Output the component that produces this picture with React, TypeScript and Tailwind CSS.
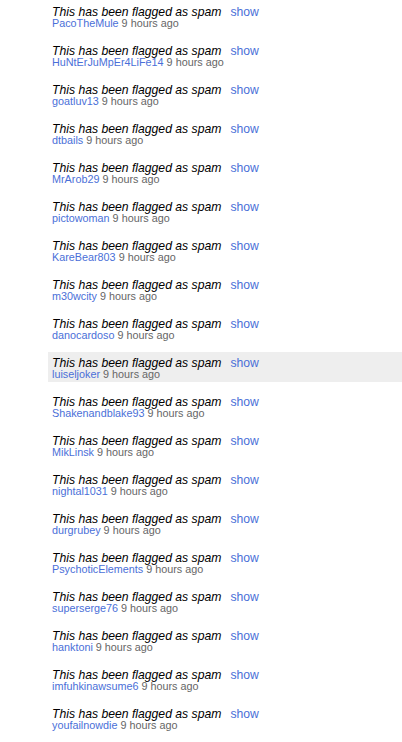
const rows = [
  "PacoTheMule",
  "HuNtErJuMpEr4LiFe14",
  "goatluv13",
  "dtbails",
  "MrArob29",
  "pictowoman",
  "KareBear803",
  "m30wcity",
  "danocardoso",
  "luiseljoker",
  "Shakenandblake93",
  "MikLinsk",
  "nightal1031",
  "durgrubey",
  "PsychoticElements",
  "superserge76",
  "hanktoni",
  "imfuhkinawsume6",
  "youfailnowdie",
];

export default function App() {
  return (
    <div className="bg-white min-h-[742px] pt-px pl-12 font-['Liberation_Sans',Arial,sans-serif]">
      {rows.map((name, i) => (
        <div
          key={i}
          className={`h-[30px] mb-[9px] pl-1 pt-[6px] ${i === 9 ? "bg-[#eeeeee]" : ""}`}
        >
          <div className="text-[12.2px] leading-[11px]">
            <span className="italic text-black">This has been flagged as spam</span>
            <span className="ml-[9px] text-[#4a6fd8]">show</span>
          </div>
          <div className="text-[10.8px] leading-[11px]">
            <span className="text-[#4a6fd8]">{name}</span>
            <span className="text-[#666666]"> 9 hours ago</span>
          </div>
        </div>
      ))}
    </div>
  );
}
